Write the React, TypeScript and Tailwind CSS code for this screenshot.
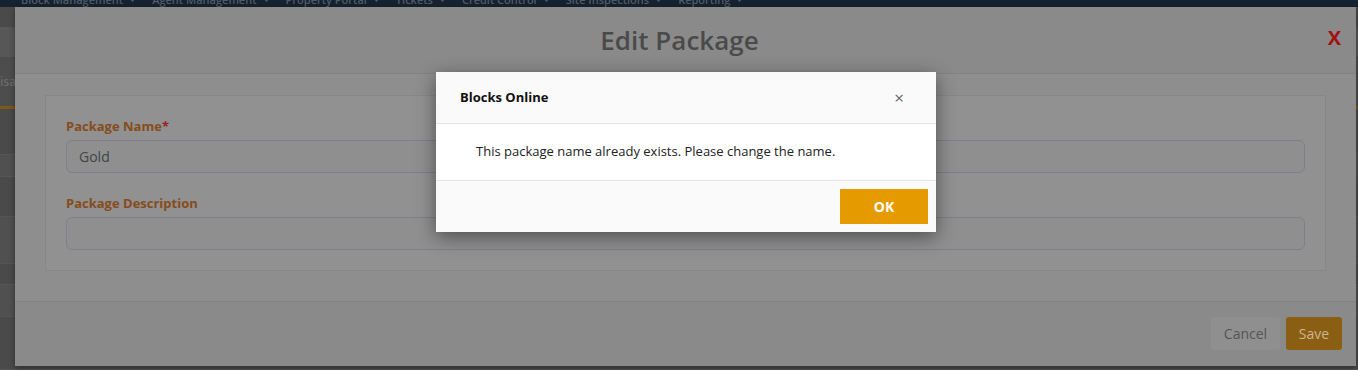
import React from "react";

const navItems = [
  "Block Management",
  "Agent Management",
  "Property Portal",
  "Tickets",
  "Credit Control",
  "Site Inspections",
  "Reporting",
];

const Caret = () => (
  <svg width="9" height="6" viewBox="0 0 9 6" className="ml-[5px] inline-block">
    <path d="M0 0 L9 0 L4.5 5 Z" fill="#4f5b67" />
  </svg>
);

// page behind the modals, already dimmed by the backdrop
const BackPage = () => (
  <div className="flex h-[370px] flex-col bg-[#4a4a4a]">
    <div className="h-[7px] overflow-hidden bg-[#16222f]">
      <div className="-mt-[7px] flex gap-[15px] pl-[21px] text-[11px] font-semibold leading-[14px] text-[#505c68]">
        {navItems.map((item) => (
          <span key={item} className="flex items-center whitespace-nowrap">
            {item}
            <Caret />
          </span>
        ))}
      </div>
    </div>
    <div className="h-[20px] bg-[#4a4a4a]" />
    <div className="h-[30px] bg-[#575757]" />
    <div className="h-[49px] bg-[#4d4d4d] pt-[16px] text-[12px] font-semibold text-[#6a6a6a]">isa</div>
    <div className="h-[3px] bg-[#7a5a14]" />
    <div className="h-[46px] border-b border-[#555]" />
    <div className="h-[22px] border-b border-[#555] bg-[#505050]" />
    <div className="h-[40px] border-b border-[#555]" />
    <div className="h-[47px] border-b border-[#555] bg-[#505050]" />
    <div className="h-[21px] border-b border-[#555]" />
    <div className="h-[32px] border-b border-[#555] bg-[#505050]" />
    <div className="flex-1 border-b border-[#555]" />
  </div>
);

const Field = ({ label, required, value }: { label: string; required?: boolean; value?: string }) => (
  <div className="flex flex-col">
    <label className="mb-[5px] text-[13px] font-bold leading-[18px] text-[#864c1d]">
      {label}
      {required && <span className="text-[#9c1f1f]">*</span>}
    </label>
    <div className="flex h-[33px] items-center rounded-[6px] border border-[#7e8089] bg-[#8f8f8f] px-3 text-[14px] text-[#3f4448]">
      {value}
    </div>
  </div>
);

const EditPackage = () => (
  <div className="absolute left-[15px] top-[7px] flex h-[359px] w-[1341px] flex-col bg-[#8a8a8a] shadow-[0_2px_6px_rgba(0,0,0,0.4)]">
    <div className="relative flex h-[67px] items-center justify-center border-b border-[#838383] pr-3">
      <h1 className="text-[26px] font-semibold text-[#4a4a4a]">Edit Package</h1>
      <span className="absolute right-[15px] top-[16px] text-[20px] font-bold text-[#a31212]">X</span>
    </div>
    <div className="bg-[#8d8e8d] px-[30px] pb-[30px] pt-[21px]">
      <div className="flex flex-col gap-[21px] border border-[#878787] bg-[#919191] px-5 pb-5 pt-[21px]">
        <Field label="Package Name" required value="Gold" />
        <Field label="Package Description" />
      </div>
    </div>
    <div className="flex flex-1 items-start justify-end gap-[6px] border-t border-[#838383] pr-[14px] pt-[15px]">
      <button className="h-[33px] w-[69px] rounded-[3px] bg-[#8f8f8f] text-[14px] text-[#555]">Cancel</button>
      <button className="h-[33px] w-[56px] rounded-[3px] bg-[#8b5f13] text-[14px] text-[#cbb68c]">Save</button>
    </div>
  </div>
);

const AlertDialog = () => (
  <div className="absolute left-[436px] top-[72px] w-[500px] bg-white shadow-[0_5px_18px_rgba(0,0,0,0.45)]">
    <div className="flex h-[52px] items-center justify-between border-b border-[#e5e5e5] bg-[#fafafa] pl-6 pr-[32px]">
      <span className="text-[13px] font-bold text-[#111]">Blocks Online</span>
      <span className="text-[17px] leading-none text-[#666]">×</span>
    </div>
    <div className="flex h-[57px] items-center border-b border-[#e5e5e5] px-10 text-[13px] text-[#222]">
      This package name already exists. Please change the name.
    </div>
    <div className="flex h-[51px] items-center justify-end bg-[#fafafa] pr-2">
      <button className="h-[35px] w-[88px] bg-[#e59a00] text-[14px] font-bold text-white">OK</button>
    </div>
  </div>
);

export default function App() {
  return (
    <div className="relative h-[370px] w-[1358px] overflow-hidden font-['Open_Sans',sans-serif]">
      <BackPage />
      <EditPackage />
      <AlertDialog />
    </div>
  );
}
